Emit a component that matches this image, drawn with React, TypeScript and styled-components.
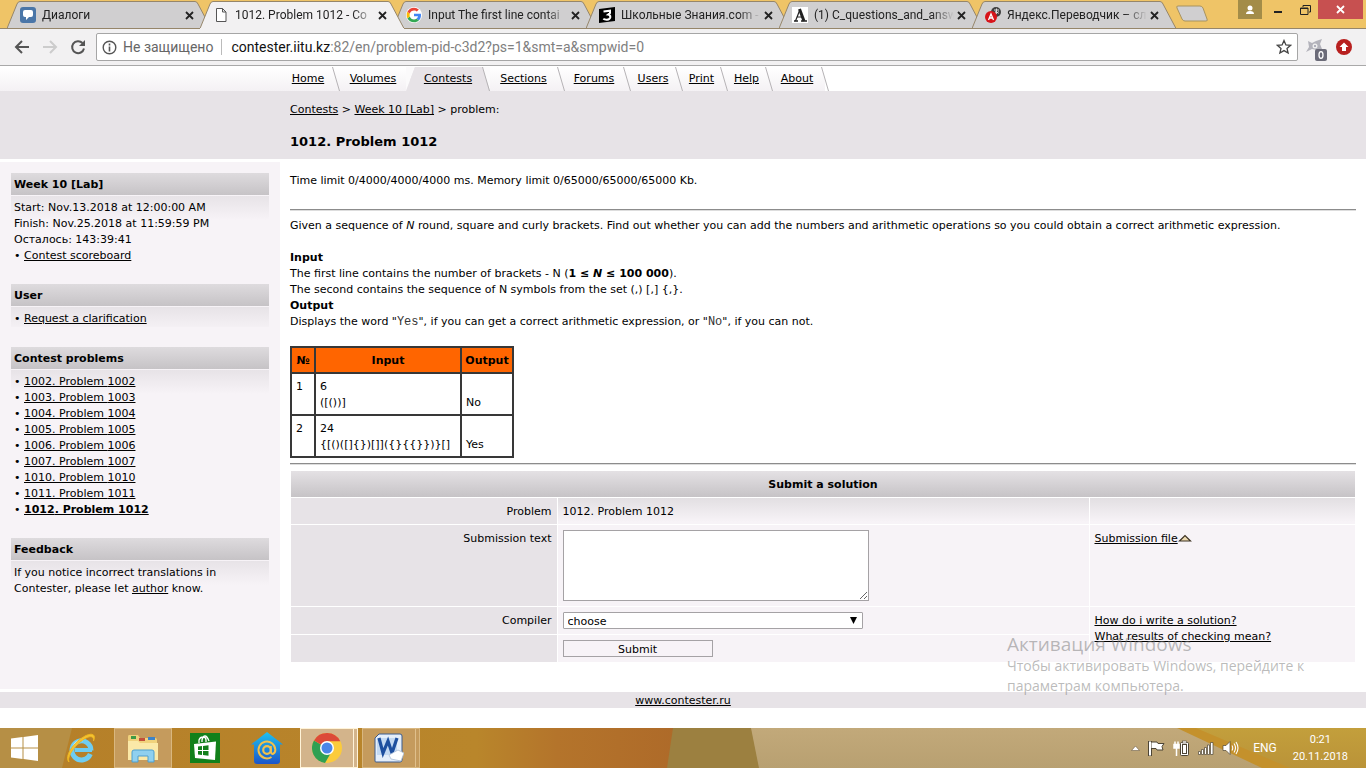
import React from 'react';
import styled, { createGlobalStyle, css } from 'styled-components';

const Global = createGlobalStyle`
  * { box-sizing: border-box; }
  body { margin: 0; background: #fff; color: #000; font: 11px/16px "DejaVu Sans", Verdana, sans-serif; }
  a { color: #000; }
  button, input, select, textarea { font: inherit; color: inherit; }
`;

const ui = 'Roboto, "Segoe UI", sans-serif';

const Screen = styled.div`
  position: relative;
  display: flex;
  flex-direction: column;
  min-height: 100vh;
`;

/* ---------- browser chrome ---------- */
const TabStrip = styled.header`
  display: flex;
  height: 29px;
  padding-left: 7px;
  background: #efc467;
  border-bottom: 1px solid #96866a;
  font: 12px/16px ${ui};
`;
const Tabs = styled.div`
  display: flex;
  flex: 0 1 1169px;
  min-width: 0;
`;
const TabBox = styled.div<{ $active?: boolean }>`
  position: relative;
  display: flex;
  align-items: center;
  flex: 1 1 0;
  min-width: 0;
  height: 29px;
  margin-right: -11px;
  padding: 1px 14px 0 13px;
  z-index: ${p => (p.$active ? 2 : 1)};
  &:last-child { margin-right: 0; }
  & > svg { flex: none; }
`;
const TabShape = styled.svg`
  position: absolute;
  inset: 0;
  width: 100%;
  height: 29px;
  z-index: -1;
`;
const TabTitle = styled.span`
  flex: 1;
  min-width: 0;
  margin-left: 6px;
  overflow: hidden;
  white-space: nowrap;
  color: #222;
  mask-image: linear-gradient(90deg, #000 84%, transparent);
`;
const TabClose = styled.button`
  display: flex;
  flex: none;
  padding: 3px;
  border: 0;
  background: none;
`;
const NewTab = styled.button`
  display: flex;
  align-self: center;
  padding: 0;
  border: 0;
  background: none;
`;
const WindowButtons = styled.div`
  display: flex;
  align-items: flex-start;
  margin-left: auto;
  padding-right: 3px;
`;
const WinButton = styled.button<{ $w: number; $bg?: string }>`
  display: flex;
  align-items: center;
  justify-content: center;
  width: ${p => p.$w}px;
  height: 19px;
  padding: 0;
  border: 0;
  background: ${p => p.$bg || 'none'};
`;
const Toolbar = styled.div`
  display: flex;
  align-items: center;
  height: 37px;
  padding: 0 8px;
  background: #f2f1f2;
  border-bottom: 1px solid #a9a9a9;
`;
const ToolButton = styled.button`
  display: flex;
  justify-content: center;
  width: 28px;
  padding: 0;
  border: 0;
  background: none;
`;
const Omnibox = styled.div`
  display: flex;
  align-items: center;
  flex: 1;
  min-width: 0;
  height: 28px;
  margin: 0 4px;
  padding: 0 5px;
  border: 1px solid #a6a6a6;
  border-radius: 2px;
  background: #fff;
  font: 14px/20px ${ui};
`;
const Insecure = styled.span`
  margin-left: 6px;
  padding-right: 8px;
  border-right: 1px solid #bbb;
  line-height: 16px;
  color: #666;
`;
const Url = styled.span`
  flex: 1;
  min-width: 0;
  margin-left: 9px;
  overflow: hidden;
  white-space: nowrap;
  color: #808080;
  b { font-weight: 400; color: #111; }
`;

/* ---------- site ---------- */
const Nav = styled.nav`
  display: flex;
  height: 25px;
  padding-top: 1px;
  background: #fff;
`;
const NavLead = styled.div`
  width: 280px;
  background: linear-gradient(#fff, #f4f1f4);
`;
const NavItem = styled.div<{ $w: number; $active?: boolean }>`
  position: relative;
  width: ${p => p.$w}px;
  padding-top: 4px;
  text-align: center;
  background: ${p => (p.$active ? '#e7e3e7' : 'linear-gradient(#fff, #f4f1f4)')};
`;
const Slash = styled.svg<{ $side: 'left' | 'right' }>`
  position: absolute;
  top: 0;
  ${p => p.$side}: -4px;
  z-index: 1;
`;
const Head = styled.div`
  padding: 11px 10px 9px 290px;
  background: #e7e3e7;
`;
const Title = styled.h1`
  margin: 16px 0 0;
  font: bold 13px/16px "DejaVu Sans", Verdana, sans-serif;
`;
const Body = styled.div`
  display: flex;
  flex: 1;
  margin: 3px 0;
`;
const Sidebar = styled.aside`
  flex: 0 0 280px;
  padding: 11px 11px 0;
  background: #f7f3f7;
`;
const Section = styled.section`
  padding-bottom: 20px;
`;
const SectionHead = styled.h2`
  margin: 0;
  padding: 4px 3px 2px;
  font: bold 11px/16px "DejaVu Sans", Verdana, sans-serif;
  background: linear-gradient(#dedbde, #c6c3c6);
`;
const SectionBody = styled.div`
  margin-top: 1px;
  padding: 4px 3px 0;
  background: linear-gradient(#e7e3e7, #f7f3f7 24px);
`;
const Bullets = styled.ul`
  margin: 0;
  padding: 0;
  list-style: none;
  li::before { content: "• "; }
`;
const Item = styled.li<{ $current?: boolean }>`
  a { font-weight: ${p => (p.$current ? 700 : 400)}; }
`;
const Main = styled.main`
  flex: 1;
  min-width: 0;
  padding: 11px 10px 26px;
`;
const Rule = styled.hr<{ $top: number; $bottom: number }>`
  height: 2px;
  margin: ${p => p.$top}px 0 ${p => p.$bottom}px;
  border: 0;
  border-top: 1px solid #8c8c8c;
  background: #ddd;
`;
const Para = styled.p`
  margin: 0 0 16px;
`;
const Mono = styled.span`
  font: 12px/15px "Liberation Mono", "Courier New", monospace;
  color: #333;
`;
const Samples = styled.table`
  width: 222px;
  table-layout: fixed;
  border-collapse: collapse;
  th, td { border: 2px solid #383838; padding: 5px 4px 3px; text-align: left; vertical-align: top; white-space: nowrap; }
  th { background: #ff6500; text-align: center; }
  th:first-child, th:last-child { padding: 5px 0 3px; }
  td:last-child { vertical-align: bottom; }
`;
const Submit = styled.table`
  width: 100%;
  table-layout: fixed;
  border-spacing: 1px;
  th { padding: 6px 5px 4px; }
  thead th { background: linear-gradient(#e4e1e4, #c6c3c6); }
  tbody th { background: #e7e3e7; font-weight: 400; text-align: right; vertical-align: top; }
  tbody tr:first-child td { background: linear-gradient(#e2dfe2, #f7f3f7 24px); }
`;
const Cell = styled.td<{ $control?: boolean }>`
  padding: ${p => (p.$control ? '5px' : '6px 5px 4px')};
  background: #f7f3f7;
  vertical-align: top;
`;
const field = css`
  display: block;
  border: 1px solid #a5a2a5;
  background: #fff;
`;
const Source = styled.textarea`
  ${field}
  width: 306px;
  height: 71px;
`;
const SelectWrap = styled.div`
  position: relative;
  width: 300px;
  svg { position: absolute; right: 6px; top: 5px; pointer-events: none; }
`;
const Compiler = styled.select`
  ${field}
  appearance: none;
  width: 100%;
  height: 17px;
  padding: 2px 4px 0;
  line-height: 13px;
  border-radius: 1px;
`;
const SubmitButton = styled.button`
  ${field}
  width: 150px;
  height: 17px;
  padding: 2px 0 0;
  line-height: 13px;
  background: #f7f3f7;
`;
const Footer = styled.footer`
  margin-bottom: 20px;
  padding-top: 1px;
  line-height: 15px;
  text-align: center;
  background: #e7e3e7;
`;
const Watermark = styled.div`
  position: absolute;
  right: 58px;
  bottom: 72px;
  z-index: 5;
  width: 301px;
  color: rgba(120, 120, 120, 0.5);
  font: 14px/20px "Open Sans", "Segoe UI", sans-serif;
  white-space: nowrap;
  pointer-events: none;
`;
const WatermarkTitle = styled.div`
  font-size: 19px;
  line-height: 24px;
`;

/* ---------- taskbar ---------- */
const Taskbar = styled.footer`
  position: relative;
  display: flex;
  height: 40px;
  color: #fff;
  font: 11px/17px ${ui};
  isolation: isolate;
`;
const Wallpaper = styled.svg`
  position: absolute;
  inset: 0;
  width: 100%;
  height: 40px;
  z-index: -1;
`;
const Task = styled.button<{ $state?: 'open' | 'active'; $stack?: boolean; $start?: boolean }>`
  position: relative;
  display: flex;
  align-items: center;
  justify-content: center;
  width: ${p => (p.$start ? 48 : 58)}px;
  height: 40px;
  margin-right: 4px;
  padding: 0 ${p => (p.$stack ? 5 : 0)}px 0 0;
  border: 1px solid ${p => (p.$state === 'active' ? '#fff3d8' : p.$state ? '#d9b77f' : 'transparent')};
  background: ${p => (p.$state === 'active' ? '#d3b48b' : p.$state ? '#c59b5d' : 'none')};
  ${p => p.$stack && css`
    &::after {
      content: "";
      position: absolute;
      top: 0;
      bottom: 0;
      right: 3px;
      border-right: 1px solid ${p.$state === 'active' ? '#fff3d8' : '#e0c08c'};
    }
  `}
`;
const Tray = styled.div`
  display: flex;
  align-items: center;
  gap: 8px;
  margin-left: auto;
  padding-right: 18px;
`;
const Language = styled.span`
  margin-left: 6px;
  font-size: 12px;
`;
const Clock = styled.div`
  margin-left: 8px;
  text-align: center;
`;

const Cross = ({ color = '#222' }: { color?: string }) => (
  <svg width="9" height="9" viewBox="0 0 9 9"><path d="M1 1l7 7M8 1l-7 7" stroke={color} strokeWidth="1.8" /></svg>
);

const GoogleG = () => (
  <svg width="16" height="16" viewBox="0 0 48 48">
    <rect width="48" height="48" rx="24" fill="#fff" />
    <path fill="#4285F4" d="M45 24.500c0-1.600-.1-2.700-.4-4H24v7.500h12c-.3 2-1.600 5-4.600 7l7 5.500c4.200-3.900 6.600-9.500 6.600-16z" />
    <path fill="#34A853" d="M24 46c6 0 11-2 14.600-5.300l-7-5.400c-1.900 1.300-4.400 2.200-7.600 2.200-5.800 0-10.800-3.900-12.500-9.200l-7.300 5.600C7.800 41.200 15.300 46 24 46z" />
    <path fill="#FBBC05" d="M11.500 28.300c-.5-1.300-.7-2.800-.7-4.300s.3-3 .7-4.300l-7.300-5.600C2.800 17 2 20.400 2 24s.8 7 2.300 9.900z" />
    <path fill="#EA4335" d="M24 10.500c4.100 0 6.900 1.800 8.500 3.300l6.200-6C34.900 4.200 30 2 24 2 15.300 2 7.800 6.800 4.200 14.100l7.300 5.600c1.700-5.300 6.700-9.200 12.500-9.200z" />
  </svg>
);

const tabs: { title: string; active?: boolean; icon: React.ReactNode }[] = [
  { title: 'Диалоги', icon: (
    <svg width="16" height="16"><rect width="16" height="16" rx="3" fill="#4a76a8" /><path d="M5 3h6q2 0 2 2v3q0 2-2 2h-2l-3 3v-3h-1q-2 0-2-2v-3q0-2 2-2z" fill="#fff" /></svg>) },
  { title: '1012. Problem 1012 - Co', active: true, icon: (
    <svg width="16" height="16"><path d="M3.500 1.500h6l3.500 3.500v9.500h-9.500zM9.500 1.500v3.500h3.500" fill="#fff" stroke="#555" /></svg>) },
  { title: 'Input The first line contai', icon: <GoogleG /> },
  { title: 'Школьные Знания.com -', icon: (
    <svg width="16" height="16"><path d="M0 2l16-2v14l-16 2z" fill="#000" /><path d="M4.500 4.500L11 3.700V6L9 7.600Q11.500 8 11.300 10.200Q10.800 12.500 8 12.700Q5.500 12.800 4.300 11.800" fill="none" stroke="#fff" strokeWidth="2" /></svg>) },
  { title: '(1) C_questions_and_answ', icon: (
    <svg width="16" height="16"><rect width="16" height="16" fill="#fff" /><path d="M2 14h4M9 14h6" stroke="#222" strokeWidth="1.500" /><path d="M3.500 14L8 2.500M5 10h5" stroke="#222" strokeWidth="1.200" /><path d="M7.500 2L12 14" stroke="#222" strokeWidth="3" /></svg>) },
  { title: 'Яндекс.Переводчик – сл', icon: (
    <svg width="16" height="16"><circle cx="11" cy="5" r="5" fill="#3f3f3f" /><path d="M9 3h5M11.500 1.500v5M13.500 4.500q-3 4-3 1t3 1" fill="none" stroke="#ddd" /><circle cx="6" cy="10" r="6" fill="#d7141a" /><path d="M3.500 13L6 7L8.500 13M4.500 11h3" fill="none" stroke="#fff" strokeWidth="1.300" /></svg>) },
];

const nav = [
  ['Home', 56], ['Volumes', 74], ['Contests', 76], ['Sections', 75], ['Forums', 66],
  ['Users', 52], ['Print', 45], ['Help', 45], ['About', 56],
] as [string, number][];

const problems = [1002, 1003, 1004, 1005, 1006, 1007, 1010, 1011, 1012];

export default function App() {
  return (
    <Screen>
      <Global />
      <TabStrip>
        <Tabs>
          {tabs.map(t => (
            <TabBox key={t.title} $active={t.active}>
              <TabShape viewBox="0 0 204 29" preserveAspectRatio="none">
                <path d="M0 28.500L10 4Q11 1.500 13 1.500H188Q190 1.500 191 4L204 28.500" fill={t.active ? '#f2f1f2' : '#d0cfd0'} stroke="#96866a" />
                <path d="M0 28.500H204" stroke={t.active ? '#f2f1f2' : '#96866a'} />
              </TabShape>
              {t.icon}
              <TabTitle>{t.title}</TabTitle>
              <TabClose aria-label="Close tab"><Cross /></TabClose>
            </TabBox>
          ))}
        </Tabs>
        <NewTab aria-label="New tab">
          <svg width="33" height="18"><path d="M2 1h22q2 0 3 2l4 11q1 2-1 2h-21q-2 0-3-2l-5-11q-1-2 1-2z" fill="#d0cfd0" stroke="#a8935f" /></svg>
        </NewTab>
        <WindowButtons>
          <WinButton $w={24} $bg="#a38c48" aria-label="Profile">
            <svg width="10" height="10"><circle cx="5" cy="3" r="2.500" fill="#fff" /><path d="M1 9q0-3 4-3t4 3z" fill="#fff" /></svg>
          </WinButton>
          <WinButton $w={31} aria-label="Minimize"><svg width="10" height="10"><rect x="1" y="6" width="8" height="2" fill="#222" /></svg></WinButton>
          <WinButton $w={25} aria-label="Restore"><svg width="11" height="10"><path d="M3 2V.5h7.500V7H9M.5 3h7.500v6.500h-7.500zM.5 3.500h7.500" fill="none" stroke="#222" /></svg></WinButton>
          <WinButton $w={45} $bg="#c75050" aria-label="Close"><Cross color="#fff" /></WinButton>
        </WindowButtons>
      </TabStrip>
      <Toolbar>
        <ToolButton aria-label="Back"><svg width="16" height="16"><path d="M15 8H2M8 2L2 8l6 6" fill="none" stroke="#555" strokeWidth="2" /></svg></ToolButton>
        <ToolButton aria-label="Forward"><svg width="16" height="16"><path d="M1 8h13M8 2l6 6l-6 6" fill="none" stroke="#ccc" strokeWidth="2" /></svg></ToolButton>
        <ToolButton aria-label="Reload"><svg width="16" height="16"><path d="M12.500 4A6 6 0 1 0 14 9.500" fill="none" stroke="#555" strokeWidth="2" /><path d="M15 1v6H9z" fill="#555" /></svg></ToolButton>
        <Omnibox>
          <svg width="15" height="15"><circle cx="7.500" cy="7.500" r="6.300" fill="none" stroke="#555" strokeWidth="1.400" /><path d="M7.500 3.500v2M7.500 6.500v5" stroke="#555" strokeWidth="1.600" /></svg>
          <Insecure>Не защищено</Insecure>
          <Url><b>contester.iitu.kz</b>:82/en/problem-pid-c3d2?ps=1&amp;smt=a&amp;smpwid=0</Url>
          <svg width="16" height="16"><path d="M8 1.500l1.900 4.400 4.700.4-3.600 3.100 1.100 4.600L8 11.600 3.900 14 5 9.400 1.400 6.300l4.700-.4z" fill="none" stroke="#444" strokeWidth="1.300" /></svg>
        </Omnibox>
        <ToolButton aria-label="Extension">
          <svg width="24" height="30"><path d="M2 20l3-5-1-6 4 2 4-2 6-2-2 5 2 5-5 1-5-1z" fill="#b3b3bb" /><circle cx="11" cy="14" r="2.500" fill="#eee" /><circle cx="11" cy="14" r="1" fill="#99a" /><rect x="11" y="17" width="12" height="12" rx="2" fill="#6b6b78" /><ellipse cx="17" cy="23" rx="2" ry="3.300" fill="none" stroke="#fff" strokeWidth="1.300" /></svg>
        </ToolButton>
        <ToolButton aria-label="Updates">
          <svg width="16" height="16"><circle cx="8" cy="8" r="8" fill="#b8201f" /><path d="M8 3.500l4.500 4.500H10v4H6V8H3.500z" fill="#fff" /></svg>
        </ToolButton>
      </Toolbar>

      <Nav>
        <NavLead />
        {nav.map(([name, w]) => (
          <NavItem key={name} $w={w} $active={name === 'Contests'}>
            <a href="#">{name}</a>
            {name === 'Contests' && (
              <Slash $side="left" width="9" height="24"><path d="M0 0H9L0 24z" fill="#fbfafb" /><path d="M9 0V24H0z" fill="#e7e3e7" /></Slash>
            )}
            {name !== 'Volumes' && (
              <Slash $side="right" width="8" height="24">
                {name === 'Contests' && <><path d="M0 0H8V24z" fill="#fbfafb" /><path d="M0 0V24H8z" fill="#e7e3e7" /></>}
                {name === 'About' && <path d="M0 0H8V24z" fill="#fff" />}
                <path d="M.5 0L7.500 24" stroke="#b5b2b5" />
              </Slash>
            )}
          </NavItem>
        ))}
      </Nav>
      <Head>
        <div><a href="#">Contests</a> &gt; <a href="#">Week 10 [Lab]</a> &gt; problem:</div>
        <Title>1012. Problem 1012</Title>
      </Head>
      <Body>
        <Sidebar>
          <Section>
            <SectionHead>Week 10 [Lab]</SectionHead>
            <SectionBody>
              Start: Nov.13.2018 at 12:00:00 AM<br />
              Finish: Nov.25.2018 at 11:59:59 PM<br />
              Осталось: 143:39:41
              <Bullets><Item><a href="#">Contest scoreboard</a></Item></Bullets>
            </SectionBody>
          </Section>
          <Section>
            <SectionHead>User</SectionHead>
            <SectionBody><Bullets><Item><a href="#">Request a clarification</a></Item></Bullets></SectionBody>
          </Section>
          <Section>
            <SectionHead>Contest problems</SectionHead>
            <SectionBody>
              <Bullets>
                {problems.map(n => <Item key={n} $current={n === 1012}><a href="#">{n}. Problem {n}</a></Item>)}
              </Bullets>
            </SectionBody>
          </Section>
          <Section>
            <SectionHead>Feedback</SectionHead>
            <SectionBody>
              If you notice incorrect translations in<br />
              Contester, please let <a href="#">author</a> know.
            </SectionBody>
          </Section>
        </Sidebar>
        <Main>
          <Para>Time limit 0/4000/4000/4000 ms. Memory limit 0/65000/65000/65000 Kb.</Para>
          <Rule $top={20} $bottom={7} />
          <Para>
            Given a sequence of <i>N</i> round, square and curly brackets. Find out whether you can add the numbers and arithmetic operations so you could obtain a correct arithmetic expression.
          </Para>
          <Para>
            <b>Input</b><br />
            The first line contains the number of brackets - N (<b>1 ≤ <i>N</i> ≤ 100 000</b>).<br />
            The second contains the sequence of N symbols from the set (,) [,] {'{'},{'}'}.<br />
            <b>Output</b><br />
            Displays the word "<Mono>Yes</Mono>", if you can get a correct arithmetic expression, or "<Mono>No</Mono>", if you can not.
          </Para>
          <Samples>
            <colgroup><col width="24" /><col width="146" /><col width="52" /></colgroup>
            <thead><tr><th>№</th><th>Input</th><th>Output</th></tr></thead>
            <tbody>
              <tr><td>1</td><td>6<br />([())]</td><td>No</td></tr>
              <tr><td>2</td><td>24<br />{'{[()([]{})[]]({}{{}})}[]'}</td><td>Yes</td></tr>
            </tbody>
          </Samples>
          <Rule $top={5} $bottom={5} />
          <form onSubmit={e => e.preventDefault()}>
            <Submit>
              <colgroup><col width="25%" /><col width="50%" /><col width="25%" /></colgroup>
              <thead><tr><th colSpan={3}>Submit a solution</th></tr></thead>
              <tbody>
                <tr><th>Problem</th><Cell>1012. Problem 1012</Cell><Cell /></tr>
                <tr>
                  <th><label htmlFor="source">Submission text</label></th>
                  <Cell $control><Source id="source" /></Cell>
                  <Cell>
                    <a href="#">Submission file</a>
                    <svg width="14" height="8"><path d="M1.500 7L7 1.500L12.500 7z" fill="#ecd9b0" stroke="#3c3223" strokeWidth="1.200" /></svg>
                  </Cell>
                </tr>
                <tr>
                  <th><label htmlFor="compiler">Compiler</label></th>
                  <Cell $control>
                    <SelectWrap>
                      <Compiler id="compiler"><option>choose</option></Compiler>
                      <svg width="7" height="7"><path d="M0 0H7L3.500 7z" /></svg>
                    </SelectWrap>
                  </Cell>
                  <Cell rowSpan={2}>
                    <a href="#">How do i write a solution?</a><br />
                    <a href="#">What results of checking mean?</a>
                  </Cell>
                </tr>
                <tr><th /><Cell $control><SubmitButton type="submit">Submit</SubmitButton></Cell></tr>
              </tbody>
            </Submit>
          </form>
        </Main>
      </Body>
      <Footer><a href="#">www.contester.ru</a></Footer>

      <Watermark>
        <WatermarkTitle>Активация Windows</WatermarkTitle>
        Чтобы активировать Windows, перейдите к<br />параметрам компьютера.
      </Watermark>

      <Taskbar>
        <Wallpaper viewBox="0 0 1366 40" preserveAspectRatio="none">
          <defs>
            <linearGradient id="amber"><stop offset="0" stopColor="#b57f29" /><stop offset=".7" stopColor="#b9862b" /><stop offset=".82" stopColor="#b4742b" /><stop offset="1" stopColor="#ae6a29" /></linearGradient>
            <linearGradient id="sand" x2="0" y2="1"><stop offset="0" stopColor="#c2a97a" /><stop offset="1" stopColor="#b8a071" /></linearGradient>
            <linearGradient id="gold" x2="0" y2="1"><stop offset="0" stopColor="#c39f3c" /><stop offset="1" stopColor="#ba9338" /></linearGradient>
          </defs>
          <path d="M0 0H680V40H0z" fill="url(#amber)" />
          <path d="M0 0H72L62 40H0z" fill="#b68f45" />
          <path d="M673 0H760V40H667z" fill="#9c8040" />
          <path d="M751 0H1200L1270 40H759z" fill="url(#sand)" />
          <path d="M1177 0H1200L1300 40H1262z" fill="#c4912c" />
          <path d="M1196 0H1366V40H1290z" fill="url(#gold)" />
        </Wallpaper>
        <Task $start aria-label="Start">
          <svg width="27" height="26"><path d="M0 3.500L11.500 2V12.500H0zM12.500 1.900L27 0V12.500H12.500zM0 13.500H11.500V24L0 22.500zM12.500 13.500H27V26L12.500 24.100z" fill="#fff" /></svg>
        </Task>
        <Task aria-label="Internet Explorer">
          <svg width="32" height="32">
            <path d="M27 18H10" stroke="#6fcdf1" strokeWidth="4" />
            <path d="M26 18.500A9.500 9.500 0 1 0 25.300 22" fill="none" stroke="#6fcdf1" strokeWidth="5" />
            <path d="M18 8.500A8.500 9 0 0 0 8 17" fill="none" stroke="#c4f0fb" strokeWidth="1.500" />
            <path d="M4 30C-1 25 8 10 21 3.500C28 .5 31 3 28.500 9C29 4.500 26 3.500 21 6C10 12 1.500 25 4 30z" fill="#f5c432" stroke="#eeb51f" strokeWidth="1" />
          </svg>
        </Task>
        <Task $state="open" aria-label="File Explorer">
          <svg width="32" height="32">
            <path d="M2 3h9l2 3h15q2 0 2 2v20H1V5q0-2 1-2z" fill="#f0d27c" />
            <path d="M4 4h5v3H4z" fill="#3d9a46" /><path d="M12 6h6v3h-6z" fill="#c44f3a" /><path d="M21 5h7v3h-7z" fill="#3d83c8" />
            <path d="M1 9h10l2 2h18v17H1z" fill="#fbe9a8" />
            <path d="M5 30V20q0-2 2-2h18q2 0 2 2v10h-6v-6H11v6z" fill="#8fd0ef" stroke="#4f9fce" />
          </svg>
        </Task>
        <Task aria-label="Store">
          <svg width="30" height="30">
            <rect width="30" height="30" fill="#12801a" />
            <path d="M9 10V7q1-3 4-3t3 3v2M12 9V7q1-4 3-4t4 5" fill="none" stroke="#fff" strokeWidth="1.300" />
            <path d="M4 11L26 8.500L25 27L5 25z" fill="#fff" />
            <path d="M8 13.500l4-.5v4H8zM13 12.900l5.500-.7V17H13zM8 18h4v4l-4-.5zM13 18h5.500v4.800L13 22.100z" fill="#12801a" />
          </svg>
        </Task>
        <Task aria-label="Mail">
          <svg width="32" height="32">
            <defs><linearGradient id="house" x2="0" y2="1"><stop offset="0" stopColor="#1fc1f0" /><stop offset="1" stopColor="#1c55c8" /></linearGradient></defs>
            <path d="M16 0L32 12.500H29V29q0 3-3 3H6q-3 0-3-3V12.500H0z" fill="url(#house)" />
            <circle cx="16" cy="18" r="3.800" fill="none" stroke="#f3c04a" strokeWidth="2.200" />
            <path d="M19.800 14v5.500q.5 3 2.500 2.200Q24.500 20.500 24.300 17.500A8.400 8.400 0 1 0 20.500 25" fill="none" stroke="#f3c04a" strokeWidth="2" />
          </svg>
        </Task>
        <Task $state="active" $stack aria-label="Chrome">
          <svg width="30" height="30" viewBox="0 0 30 30">
            <circle cx="15" cy="15" r="15" fill="#fbcb3c" />
            <path d="M15 15L2 7.500A15 15 0 0 0 13 29.900L20 18z" fill="#2fa053" />
            <path d="M15 15L2 7.500A15 15 0 0 1 28.300 8.200H15z" fill="#dc4a38" />
            <circle cx="15" cy="15" r="7" fill="#fff" />
            <circle cx="15" cy="15" r="5.500" fill="#4a86e8" />
          </svg>
        </Task>
        <Task $state="open" $stack aria-label="Word">
          <svg width="30" height="30">
            <path d="M5 1H26q2 0 2 2V27q0 2-2 2H2q-1 0-1-1V5z" fill="#e4eefa" stroke="#3c5c8e" />
            <path d="M3 5h20v17H3z" fill="#c3d9f2" />
            <path d="M5 5l4 15L14 8l4 12L23 5" fill="none" stroke="#1d4f9f" strokeWidth="3.200" />
            <path d="M15 22l9-5 6 3-3 8-10-2z" fill="#fff" stroke="#a9bcd6" strokeWidth=".8" />
          </svg>
        </Task>
        <Tray>
          <svg width="9" height="16"><path d="M.5 10.500L4.500 6L8.500 10.500z" fill="#fff" stroke="#6b5d44" strokeWidth=".6" /></svg>
          <svg width="17" height="17"><path d="M2 1v15" stroke="#4d4535" strokeWidth="4" /><path d="M3 2h6l1 1.500h6l-2 3 1 3.500H9L8 8.500H3z" fill="#fff" stroke="#4d4535" /><path d="M2 1.500v14" stroke="#fff" strokeWidth="2" /></svg>
          <svg width="17" height="17"><rect x="7.500" y="2.500" width="8" height="13" rx="1" fill="#fff" stroke="#4d4535" /><rect x="9.500" y="1" width="4" height="2" fill="#fff" stroke="#4d4535" strokeWidth=".6" /><rect x="9.500" y="4.500" width="4" height="9" fill="none" stroke="#4d4535" /><path d="M1 4.500h5v3.500H1zM2 1.500v3M5 1.500v3M3.500 8v8" stroke="#fff" strokeWidth="1.500" fill="#fff" /></svg>
          <svg width="16" height="16"><path d="M.5 11.500h2v3h-2zM3.500 9.500h2v5h-2zM6.500 7.500h2v7h-2zM9.500 5h2v9.500h-2zM12.500 2.500h2.500v12h-2.500z" fill="#fff" stroke="#4d4535" strokeWidth=".7" /></svg>
          <svg width="17" height="16"><path d="M1 5.500h3l4-4v13l-4-4H1z" fill="#fff" stroke="#4d4535" strokeWidth=".7" /><path d="M10 5.500q1.500 2.500 0 5M12 3.500q3 4.500 0 9M14 2q4 6 0 12" fill="none" stroke="#fff" strokeWidth="1.100" /></svg>
          <Language>ENG</Language>
          <Clock><div>0:21</div><div>20.11.2018</div></Clock>
        </Tray>
      </Taskbar>
    </Screen>
  );
}
